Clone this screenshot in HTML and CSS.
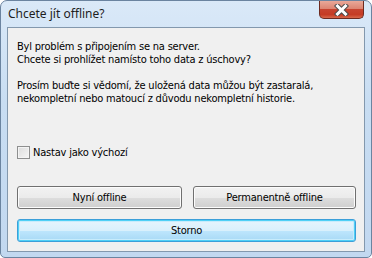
FILE: index.html
```html
<!DOCTYPE html>
<html>
    <head>
        <meta charset="utf-8">
        <link rel="stylesheet" href="styles.css">
    </head>
<body>
    <div class="window">
        <div class="titlebar">
            <div class="title">Chcete jít offline?</div>
            <div class="close">
                <svg width="15" height="12" viewBox="0 0 15 12">
                    <path d="M3.5 2 L11.5 10 M11.5 2 L3.5 10" stroke="#4a4a4a" stroke-width="5" stroke-linecap="square" fill="none"/>
                    <path d="M3.5 2 L11.5 10 M11.5 2 L3.5 10" stroke="#ffffff" stroke-width="3" stroke-linecap="square" fill="none"/>
                </svg>
            </div>
        </div>
        <div class="client">
            <p>Byl problém s připojením se na server.<br>Chcete si prohlížet namísto toho data z úschovy?</p>
            <p class="warn">Prosím buďte si vědomí, že uložená data můžou být zastaralá,<br>nekompletní nebo matoucí z důvodu nekompletní historie.</p>
            <label class="check">
                <span class="box"></span>
                Nastav jako výchozí
            </label>
            <div class="row">
                <button class="btn wide">Nyní offline</button>
                <button class="btn">Permanentně offline</button>
            </div>
            <button class="btn default">Storno</button>
        </div>
    </div>
</body>
</html>
```

FILE: styles.css
```css
* {
    padding: 0;
    margin: 0;
    box-sizing: border-box;
}
body {
    background: #ffffff;
}
.window {
    width: 372px;
    height: 258px;
    display: flex;
    flex-direction: column;
    padding: 0 6px 5px 6px;
    border: 1px solid #6b84a0;
    border-radius: 7px 7px 5px 5px;
    background: linear-gradient(#dae9f8, #c8ddf2 40%, #c2d8f0);
}
.titlebar {
    height: 26px;
    display: flex;
    align-items: flex-start;
}
.title {
    padding: 4px 0 0 1px;
    font-family: "Noto Sans", sans-serif;
    font-size: 12px;
    color: #1e1e1e;
}
.close {
    width: 45px;
    height: 18px;
    margin-left: auto;
    margin-right: 1px;
    display: flex;
    align-items: center;
    justify-content: center;
    border: 1px solid #6d2a20;
    border-top: none;
    border-radius: 0 0 5px 5px;
    background: linear-gradient(#e9a899, #dc8572 45%, #c7432f 50%, #c53b24 80%, #d8684b);
}
.client {
    flex: 1;
    display: flex;
    flex-direction: column;
    padding: 12px 8px 0 9px;
    border: 1px solid #8398ad;
    background: #f0f0f0;
    font-family: "DejaVu Sans Condensed", "DejaVu Sans", sans-serif;
    font-size: 11px;
    line-height: 13px;
    letter-spacing: -0.2px;
    color: #000000;
}
.warn {
    margin-top: 13px;
}
.check {
    display: flex;
    align-items: center;
    gap: 3px;
    height: 14px;
    margin-top: 40px;
}
.box {
    width: 13px;
    height: 13px;
    border: 1px solid #8e8f8f;
    background: linear-gradient(135deg, #dcdcdc, #f6f6f6);
    box-shadow: inset 0 0 0 1px #f4f4f4;
}
.row {
    display: flex;
    gap: 11px;
    margin-top: 27px;
}
.btn {
    height: 23px;
    width: 163px;
    border: 1px solid #707070;
    border-radius: 3px;
    background: linear-gradient(#f2f2f2, #ebebeb 50%, #dddddd 51%, #cfcfcf);
    box-shadow: inset 0 0 0 1px #fcfcfc;
    font-family: "DejaVu Sans Condensed", "DejaVu Sans", sans-serif;
    font-size: 11px;
    letter-spacing: -0.2px;
    color: #000000;
}
.wide {
    width: 165px;
}
.default {
    width: 339px;
    margin-top: 10px;
    border-color: #3c9fd9;
    background: linear-gradient(#e6f5fd, #d9f0fc 50%, #bee6fd 51%, #a7d9f5);
    box-shadow: inset 0 0 0 1px #4fd0f6, inset 0 0 0 2px #c8ecfc;
}
```
